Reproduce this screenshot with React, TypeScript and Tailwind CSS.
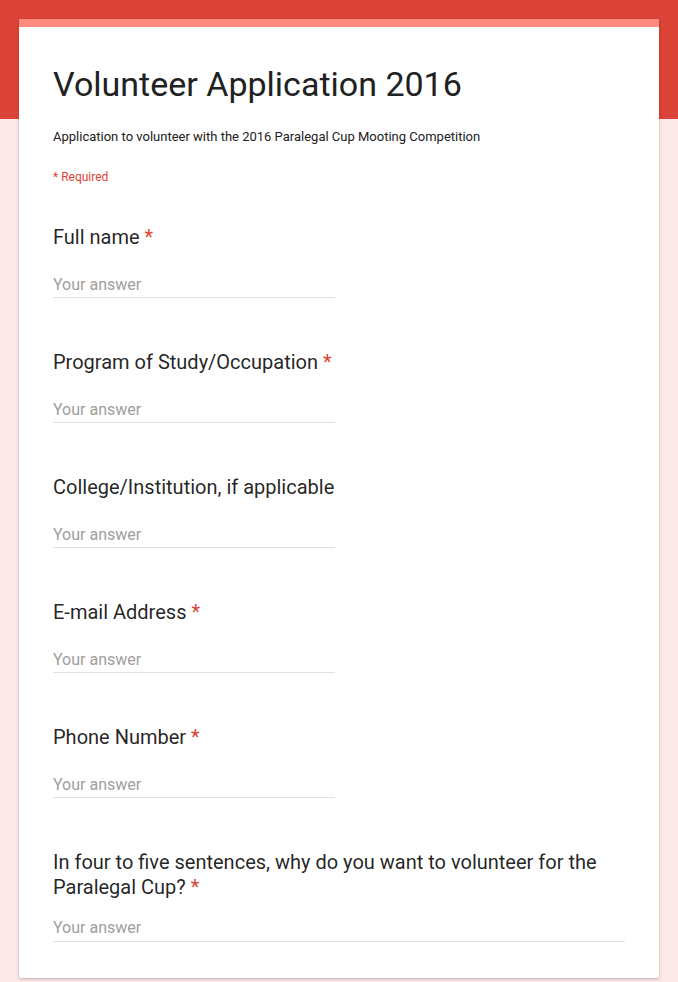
import React from 'react';

interface Question {
  id: string;
  label: string;
  required: boolean;
  wide?: boolean;
}

const questions: Question[] = [
  { id: 'name', label: 'Full name', required: true },
  { id: 'program', label: 'Program of Study/Occupation', required: true },
  { id: 'college', label: 'College/Institution, if applicable', required: false },
  { id: 'email', label: 'E-mail Address', required: true },
  { id: 'phone', label: 'Phone Number', required: true },
  {
    id: 'why',
    label: 'In four to five sentences, why do you want to volunteer for the Paralegal Cup?',
    required: true,
    wide: true,
  },
];

const Field: React.FC<{ q: Question }> = ({ q }) => (
  <div className="pt-[24px] pb-[28px]">
    <div className="text-[20px] leading-[25px] text-[#000000de]">
      {q.label}
      {q.required && <span className="text-[#db4437]"> *</span>}
    </div>
    {/* paragraph answers sit a little closer to their label */}
    <div
      className={
        q.wide
          ? 'mt-[18px] w-full border-b border-[#e0e0e0] pb-[3px]'
          : 'mt-[25px] w-[282px] border-b border-[#e0e0e0] pb-[2px]'
      }
    >
      <input
        type="text"
        placeholder="Your answer"
        className="block w-full bg-transparent text-[16px] leading-[20px] text-[#212121] outline-none placeholder:text-[#9e9e9e]"
      />
    </div>
  </div>
);

export default function App() {
  return (
    <div
      className="relative min-h-[982px] bg-[#fce8e6]"
      style={{ fontFamily: 'Roboto, "Liberation Sans", sans-serif' }}
    >
      <div className="absolute inset-x-0 top-0 h-[119px] bg-[#db4437]" />
      <div className="relative px-[19px] pt-[19px]">
        <div className="overflow-hidden rounded-[2px] bg-white shadow-[0_1px_3px_rgba(0,0,0,0.25)]">
          <div className="h-[8px] bg-[#ff8a80]" />
          <div className="px-[34px] pb-[8px]">
            <h1 className="pt-[37px] text-[34px] leading-[40px] font-normal text-[#212121]">
              Volunteer Application 2016
            </h1>
            <p className="mt-[24px] text-[13px] leading-[18px] text-[#212121]">
              Application to volunteer with the 2016 Paralegal Cup Mooting Competition
            </p>
            <p className="mt-[23px] mb-[16px] text-[12px] leading-[16px] text-[#db4437]">
              * Required
            </p>
            {questions.map((q) => (
              <Field key={q.id} q={q} />
            ))}
          </div>
        </div>
      </div>
    </div>
  );
}
